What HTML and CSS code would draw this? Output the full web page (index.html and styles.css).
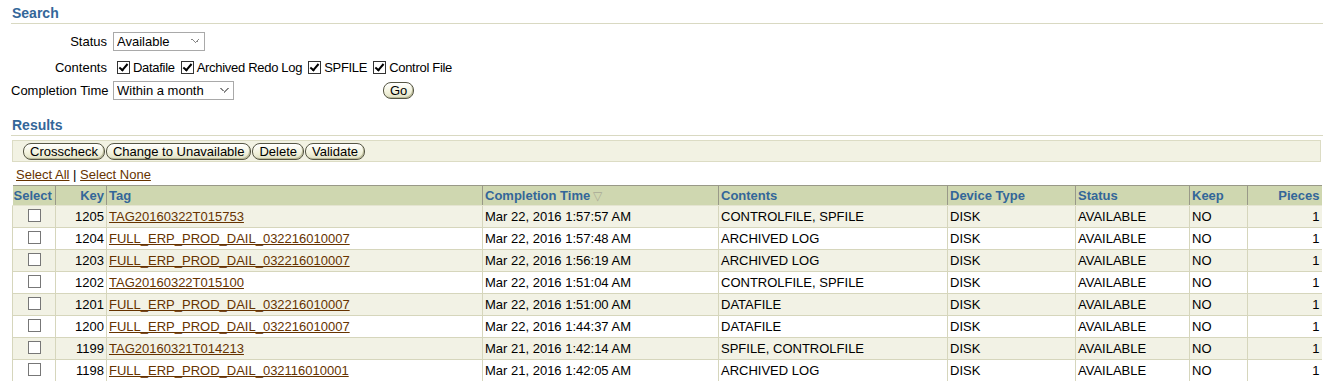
FILE: index.html
```html
<!DOCTYPE html>
<html lang="en">
<head>
    <meta charset="UTF-8">
    <title>Backup Sets</title>
    <link rel="stylesheet" href="styles.css">
</head>
<body>

<!-- Search -->
<h2 class="section-title">Search</h2>
<form class="search-form" onsubmit="return false">
    <label class="field-label" for="status">Status</label>
    <div class="field">
        <select id="status" class="dropdown status-select">
            <option>Available</option>
            <option>Unavailable</option>
            <option>Expired</option>
        </select>
    </div>

    <span class="field-label">Contents</span>
    <div class="field">
        <label class="check"><input type="checkbox" checked> Datafile</label>
        <label class="check"><input type="checkbox" checked> Archived Redo Log</label>
        <label class="check"><input type="checkbox" checked> SPFILE</label>
        <label class="check"><input type="checkbox" checked> Control File</label>
    </div>

    <label class="field-label" for="completion">Completion Time</label>
    <div class="field">
        <select id="completion" class="dropdown time-select">
            <option>Within a month</option>
            <option>Within a week</option>
            <option>All</option>
        </select>
        <button class="pill-button go-button">Go</button>
    </div>
</form>

<!-- Results -->
<h2 class="section-title results-title">Results</h2>
<div class="results">
    <div class="action-bar">
        <button class="pill-button">Crosscheck</button>
        <button class="pill-button">Change to Unavailable</button>
        <button class="pill-button">Delete</button>
        <button class="pill-button">Validate</button>
    </div>
    <div class="select-links">
        <a href="#">Select All</a> | <a href="#">Select None</a>
    </div>
    <table class="results-table">
        <colgroup>
            <col class="col-select">
            <col class="col-key">
            <col class="col-tag">
            <col class="col-time">
            <col class="col-contents">
            <col class="col-device">
            <col class="col-status">
            <col class="col-keep">
            <col class="col-pieces">
        </colgroup>
        <thead>
            <tr>
                <th>Select</th>
                <th class="num">Key</th>
                <th>Tag</th>
                <th>Completion Time<span class="sort-arrow">&#9661;</span></th>
                <th>Contents</th>
                <th>Device Type</th>
                <th>Status</th>
                <th>Keep</th>
                <th class="num">Pieces</th>
            </tr>
        </thead>
        <tbody>
            <tr>
                <td class="center"><input type="checkbox" class="row-check"></td>
                <td class="num">1205</td>
                <td><a href="#">TAG20160322T015753</a></td>
                <td>Mar 22, 2016 1:57:57 AM</td>
                <td>CONTROLFILE, SPFILE</td>
                <td>DISK</td>
                <td>AVAILABLE</td>
                <td>NO</td>
                <td class="num">1</td>
            </tr>
            <tr>
                <td class="center"><input type="checkbox" class="row-check"></td>
                <td class="num">1204</td>
                <td><a href="#">FULL_ERP_PROD_DAIL_032216010007</a></td>
                <td>Mar 22, 2016 1:57:48 AM</td>
                <td>ARCHIVED LOG</td>
                <td>DISK</td>
                <td>AVAILABLE</td>
                <td>NO</td>
                <td class="num">1</td>
            </tr>
            <tr>
                <td class="center"><input type="checkbox" class="row-check"></td>
                <td class="num">1203</td>
                <td><a href="#">FULL_ERP_PROD_DAIL_032216010007</a></td>
                <td>Mar 22, 2016 1:56:19 AM</td>
                <td>ARCHIVED LOG</td>
                <td>DISK</td>
                <td>AVAILABLE</td>
                <td>NO</td>
                <td class="num">1</td>
            </tr>
            <tr>
                <td class="center"><input type="checkbox" class="row-check"></td>
                <td class="num">1202</td>
                <td><a href="#">TAG20160322T015100</a></td>
                <td>Mar 22, 2016 1:51:04 AM</td>
                <td>CONTROLFILE, SPFILE</td>
                <td>DISK</td>
                <td>AVAILABLE</td>
                <td>NO</td>
                <td class="num">1</td>
            </tr>
            <tr>
                <td class="center"><input type="checkbox" class="row-check"></td>
                <td class="num">1201</td>
                <td><a href="#">FULL_ERP_PROD_DAIL_032216010007</a></td>
                <td>Mar 22, 2016 1:51:00 AM</td>
                <td>DATAFILE</td>
                <td>DISK</td>
                <td>AVAILABLE</td>
                <td>NO</td>
                <td class="num">1</td>
            </tr>
            <tr>
                <td class="center"><input type="checkbox" class="row-check"></td>
                <td class="num">1200</td>
                <td><a href="#">FULL_ERP_PROD_DAIL_032216010007</a></td>
                <td>Mar 22, 2016 1:44:37 AM</td>
                <td>DATAFILE</td>
                <td>DISK</td>
                <td>AVAILABLE</td>
                <td>NO</td>
                <td class="num">1</td>
            </tr>
            <tr>
                <td class="center"><input type="checkbox" class="row-check"></td>
                <td class="num">1199</td>
                <td><a href="#">TAG20160321T014213</a></td>
                <td>Mar 21, 2016 1:42:14 AM</td>
                <td>SPFILE, CONTROLFILE</td>
                <td>DISK</td>
                <td>AVAILABLE</td>
                <td>NO</td>
                <td class="num">1</td>
            </tr>
            <tr>
                <td class="center"><input type="checkbox" class="row-check"></td>
                <td class="num">1198</td>
                <td><a href="#">FULL_ERP_PROD_DAIL_032116010001</a></td>
                <td>Mar 21, 2016 1:42:05 AM</td>
                <td>ARCHIVED LOG</td>
                <td>DISK</td>
                <td>AVAILABLE</td>
                <td>NO</td>
                <td class="num">1</td>
            </tr>
        </tbody>
    </table>
</div>

</body>
</html>
```

FILE: styles.css
```css
body {
    margin: 0;
    padding: 0 2px 0 11px;
    font-family: "Liberation Sans", Arial, sans-serif;
    font-size: 13px;
    color: #000;
    background-color: #fff;
    overflow: hidden;
}
.section-title {
    margin: 0 -2px 0 0;
    padding: 6px 0 2px 1px;
    font-size: 14px;
    font-weight: bold;
    color: #336699;
    border-bottom: 1px solid #d9d9c2;
    line-height: 15px;
}
.results-title {
    margin-top: 13px;
}

/* search form */
.search-form {
    display: grid;
    grid-template-columns: 96px auto;
    grid-template-rows: 24px 28px 18px;
    column-gap: 6px;
    align-items: center;
    padding-top: 5px;
}
.field-label {
    text-align: right;
    white-space: nowrap;
}
.field {
    display: flex;
    align-items: center;
}
.dropdown {
    appearance: none;
    height: 19px;
    border: 1px solid #a9a9a9;
    border-radius: 0;
    background-color: #fff;
    font-family: "Liberation Sans", Arial, sans-serif;
    font-size: 13px;
    padding: 0 0 0 3px;
    color: #000;
    background-image: linear-gradient(45deg, transparent 50%, #888 50%, #888 64%, transparent 64%),
                      linear-gradient(-45deg, transparent 50%, #888 50%, #888 64%, transparent 64%);
    background-size: 5px 5px, 5px 5px;
    background-position: right 8px center, right 4px center;
    background-repeat: no-repeat;
}
.status-select {
    width: 92px;
}
.time-select {
    width: 121px;
}
.check {
    display: inline-flex;
    align-items: center;
    margin-right: 3px;
    white-space: nowrap;
    letter-spacing: -0.3px;
}
.check input {
    appearance: none;
    width: 13px;
    height: 13px;
    margin: 0 3px;
    border: 1px solid #333;
    background-color: #fff;
    position: relative;
}
.check input:checked::after {
    content: "";
    position: absolute;
    left: 3px;
    top: 0;
    width: 3px;
    height: 7px;
    border-right: 2px solid #000;
    border-bottom: 2px solid #000;
    transform: rotate(40deg);
}
.check:first-child input {
    margin-left: 4px;
}

/* buttons */
.pill-button {
    height: 17px;
    padding: 0 6px;
    border: 1px solid #555544;
    border-radius: 8px;
    background: linear-gradient(#ffffff, #f2f2dc 60%, #e0e0c4);
    font-family: "Liberation Sans", Arial, sans-serif;
    font-size: 13px;
    line-height: 15px;
    color: #000;
    cursor: pointer;
    box-shadow: inset -1px -1px 0 #bbbb99;
    margin: 0;
}
.go-button {
    margin-left: 149px;
}

/* results */
.results {
    margin: 4px 0 0 1px;
}
.action-bar {
    display: flex;
    gap: 1px;
    padding: 2px 10px 1px;
    height: 17px;
    background-color: #f2f2e3;
    border: 1px solid #dcdcc4;
}
.select-links {
    padding: 4px 4px 2px;
    height: 17px;
    line-height: 17px;
}
.select-links a, .results-table a {
    color: #663300;
    text-decoration: underline;
}
.results-table {
    width: 1309px;
    border-collapse: collapse;
    table-layout: fixed;
}
.col-select { width: 43px; }
.col-key { width: 51px; }
.col-tag { width: 376px; }
.col-time { width: 236px; }
.col-contents { width: 229px; }
.col-device { width: 128px; }
.col-status { width: 114px; }
.col-keep { width: 58px; }
.col-pieces { width: 74px; }

.results-table th {
    height: 19px;
    padding: 0 2px;
    background-color: #cfd7b0;
    color: #336699;
    font-weight: bold;
    text-align: left;
    border-top: 1px solid #999988;
    border-left: 1px solid #999988;
    border-bottom: 1px solid #e4e4d0;
    white-space: nowrap;
    overflow: hidden;
}
.results-table th:first-child {
    border-left: none;
    padding-left: 1px;
}
.sort-arrow {
    margin-left: 3px;
    color: #a9a996;
    font-weight: normal;
    font-size: 12px;
}
.results-table td {
    height: 21px;
    padding: 0 2px;
    border-left: 1px solid #d6d6bc;
    border-bottom: 1px solid #d6d6bc;
    white-space: nowrap;
    overflow: hidden;
}
.results-table tbody tr:nth-child(odd) td {
    background-color: #f2f2e5;
}
.results-table .num {
    text-align: right;
}
.results-table .center {
    text-align: center;
    vertical-align: top;
}
.row-check {
    appearance: none;
    width: 13px;
    height: 13px;
    margin: 3px 0 0;
    border: 1px solid #777;
    background-color: #fff;
}
```
